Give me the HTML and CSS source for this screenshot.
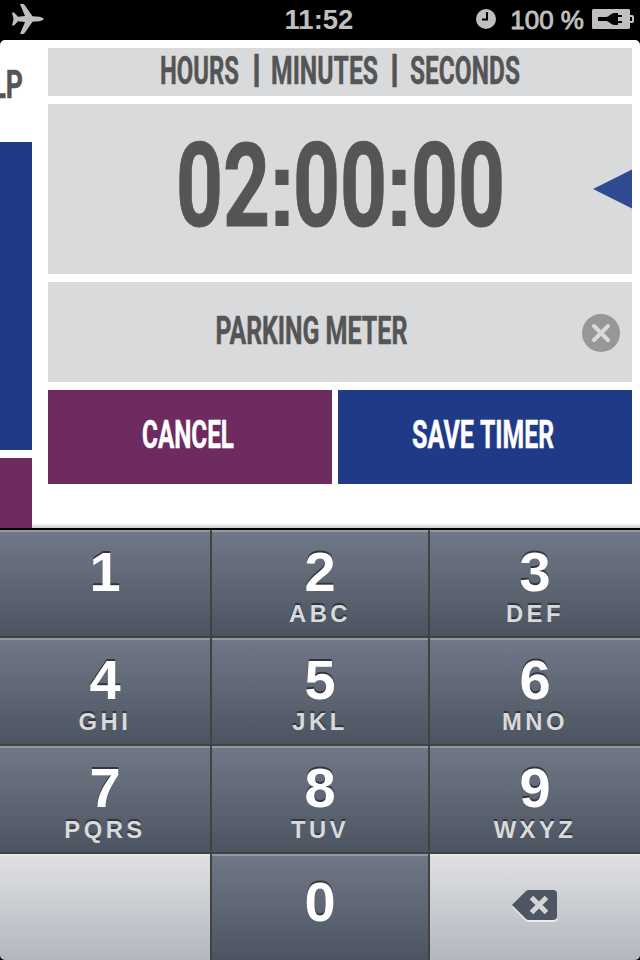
FILE: index.html
```
<!DOCTYPE html>
<html lang="en">
<head>
    <meta charset="UTF-8">
    <title>Timer</title>
    <link rel="stylesheet" href="styles.css">
</head>
<body>
    <div class="phone">
        <header class="status-bar">
            <svg class="airplane" width="32" height="31" viewBox="0 0 32 31">
                <path d="M0 8.500h2l4 4.200l7-.7L8 0h3q1 0 2 1.500l7.500 10.700l7 .6q3.500.700 4.500 2.200q-1 1.500-4.500 2.200l-7 .6L13 28.500q-1 1.500-2 1.500H8l5-12l-7-.7L2 21.500H0l1.500-6.500z"/>
            </svg>
            <span class="time">11:52</span>
            <div class="status-right">
                <svg width="20" height="20" viewBox="0 0 20 20">
                    <circle cx="10" cy="10" r="10"/>
                    <path class="clock-hand" d="M11 3v7.500H6"/>
                </svg>
                <span class="percent">100 %</span>
                <svg width="42" height="20" viewBox="0 0 42 20">
                    <rect width="38" height="20" rx="1.500"/>
                    <path d="M38 6h2q2 0 2 2v4q0 2-2 2h-2z"/>
                    <path class="plug" d="M6 8h8q2 0 4-2t5-2h3v2h4v2h-4v4h4v2h-4v2h-3q-3 0-5-2t-4-2H6z"/>
                    <path class="plug" d="M38 8h2v4h-2z"/>
                </svg>
            </div>
        </header>

        <main class="screen">
            <aside class="side">
                <svg class="side-title condensed" width="32" height="94" viewBox="0 0 32 94">
                    <text x="-8.500" y="58" textLength="31.500" lengthAdjust="spacingAndGlyphs">LP</text>
                </svg>
                <div class="side-block blue"></div>
                <div class="side-block purple"></div>
            </aside>

            <section class="editor">
                <div class="box units">
                    <svg class="condensed" width="584" height="48" viewBox="48 48 584 48">
                        <text x="160" y="84" textLength="79" lengthAdjust="spacingAndGlyphs">HOURS</text>
                        <text class="bar" x="251" y="82" textLength="11" lengthAdjust="spacingAndGlyphs">|</text>
                        <text x="271" y="84" textLength="107" lengthAdjust="spacingAndGlyphs">MINUTES</text>
                        <text class="bar" x="389" y="82" textLength="11" lengthAdjust="spacingAndGlyphs">|</text>
                        <text x="410" y="84" textLength="110" lengthAdjust="spacingAndGlyphs">SECONDS</text>
                    </svg>
                </div>
                <div class="box clock">
                    <svg class="condensed digits" width="584" height="170" viewBox="48 104 584 170">
                        <text x="176" y="226" textLength="94" lengthAdjust="spacingAndGlyphs">02</text>
                        <text class="colon" x="266.500" y="226" textLength="31" lengthAdjust="spacingAndGlyphs">:</text>
                        <text x="293" y="226" textLength="94" lengthAdjust="spacingAndGlyphs">00</text>
                        <text class="colon" x="383.500" y="226" textLength="31" lengthAdjust="spacingAndGlyphs">:</text>
                        <text x="411" y="226" textLength="94" lengthAdjust="spacingAndGlyphs">00</text>
                        <path class="pointer" d="M593 189l39-19.500v39z"/>
                    </svg>
                </div>
                <div class="box name">
                    <svg class="condensed" width="534" height="100" viewBox="48 282 534 100">
                        <text x="215.500" y="344" textLength="104" lengthAdjust="spacingAndGlyphs">PARKING</text>
                        <text x="325.500" y="344" textLength="82" lengthAdjust="spacingAndGlyphs">METER</text>
                    </svg>
                    <svg class="clear" width="38" height="38" viewBox="0 0 38 38">
                        <circle cx="19" cy="19" r="19"/>
                        <path d="M12 12l14 14M26 12L12 26"/>
                    </svg>
                </div>
                <div class="actions">
                    <div class="button purple">
                        <svg class="condensed" width="284" height="94" viewBox="48 390 284 94">
                            <text x="142" y="448" textLength="92" lengthAdjust="spacingAndGlyphs">CANCEL</text>
                        </svg>
                    </div>
                    <div class="button blue">
                        <svg class="condensed" width="294" height="94" viewBox="338 390 294 94">
                            <text x="412" y="448" textLength="62" lengthAdjust="spacingAndGlyphs">SAVE</text>
                            <text x="480" y="448" textLength="74" lengthAdjust="spacingAndGlyphs">TIMER</text>
                        </svg>
                    </div>
                </div>
            </section>
        </main>

        <div class="keypad">
            <div class="key"><b>1</b></div>
            <div class="key"><b>2</b><span>ABC</span></div>
            <div class="key"><b>3</b><span>DEF</span></div>
            <div class="key"><b>4</b><span>GHI</span></div>
            <div class="key"><b>5</b><span>JKL</span></div>
            <div class="key"><b>6</b><span>MNO</span></div>
            <div class="key"><b>7</b><span>PQRS</span></div>
            <div class="key"><b>8</b><span>TUV</span></div>
            <div class="key"><b>9</b><span>WXYZ</span></div>
            <div class="key light"></div>
            <div class="key zero"><b>0</b></div>
            <div class="key light">
                <svg class="backspace" width="45" height="32" viewBox="0 0 45 32">
                    <path class="edge" d="M0 17L14 3q1-1 3-1h24q4 0 4 4v22q0 4-4 4H17q-2 0-3-1z"/>
                    <path d="M0 15L14 1q1-1 3-1h24q4 0 4 4v22q0 4-4 4H17q-2 0-3-1z"/>
                    <path class="cross" d="M19.500 7.500l15 15M34.500 7.500l-15 15"/>
                </svg>
            </div>
        </div>
    </div>
</body>
</html>
```
FILE: styles.css
```
body {
    margin: 0;
    background: #000;
    font-family: "Liberation Sans", Arial, sans-serif;
}

svg {
    display: block;
}

.phone {
    width: 640px;
    height: 960px;
    overflow: hidden;
    background: #000;
}

/* status bar */
.status-bar {
    display: grid;
    grid-template-columns: 1fr auto 1fr;
    align-items: center;
    height: 40px;
    padding: 0 6px 0 12px;
    box-sizing: border-box;
    color: #bfbfbf;
    fill: #bfbfbf;
    font-weight: bold;
}

.airplane {
    margin-top: -2px;
}

.time {
    margin: 0 8px 0 0;
    font-size: 27.5px;
    line-height: 40px;
}

.status-right {
    display: flex;
    align-items: center;
    justify-content: flex-end;
    margin-top: -2px;
}

.percent {
    margin: 1px 8px 0 14px;
    font-size: 26px;
    font-weight: normal;
    line-height: 38px;
    -webkit-text-stroke: .9px #bfbfbf;
}

.clock-hand {
    fill: none;
    stroke: #000;
    stroke-width: 2;
}

.plug {
    fill: #000;
}

/* timer editor */
.screen {
    display: flex;
    gap: 16px;
    height: 488px;
    background: linear-gradient(transparent 483px, rgba(0, 0, 0, .2)) #fff;
    border-radius: 5px 5px 0 0;
}

.side {
    display: flex;
    flex-direction: column;
    gap: 8px;
    width: 32px;
}

.side-title {
    overflow: hidden;
}

.side-block.blue {
    height: 308px;
}

.side-block.purple {
    flex: 1;
}

.editor {
    display: flex;
    flex-direction: column;
    gap: 8px;
    width: 584px;
    padding-top: 8px;
}

.box {
    background: #d9dadc;
}

.condensed {
    font-family: Roboto, sans-serif;
    font-size: 39.4px;
    font-weight: bold;
    fill: #555;
    stroke: #555;
    stroke-width: .5px;
}

.bar {
    font-size: 39px;
}

.digits {
    font-size: 117px;
    stroke-width: 1px;
}

.colon {
    font-family: "Liberation Sans", sans-serif;
    font-size: 111px;
    stroke: none;
}

.pointer {
    fill: #304a91;
    stroke: none;
}

.name {
    display: flex;
    align-items: center;
}

.clear {
    margin-top: 2px;
}

.clear circle {
    fill: #969798;
}

.clear path {
    stroke: #d9dadc;
    stroke-width: 4;
    stroke-linecap: round;
}

.actions {
    display: flex;
    gap: 6px;
}

.button .condensed {
    fill: #fff;
    stroke: #fff;
}

.blue {
    background: #1f3a87;
}

.purple {
    background: #6d2b60;
}

/* number pad */
.keypad {
    display: grid;
    grid-template-columns: 210px 216px 210px;
    grid-template-rows: 106px 106px 106px 106px;
    gap: 2px;
    height: 430px;
    padding-top: 2px;
    background: linear-gradient(#000 2px, #424242 2px);
    border-radius: 0 0 5px 5px;
    overflow: hidden;
}

.key {
    display: flex;
    flex-direction: column;
    align-items: center;
    box-sizing: border-box;
    border-top: 2px solid #9497a4;
    padding-top: 11px;
    background: linear-gradient(#707786, #4d5461);
    color: #fff;
    text-shadow: 0 -2px 0 #30353f;
}

.key b {
    font-size: 56px;
    line-height: 58px;
}

.key span {
    color: #d9dadc;
    font-size: 23.8px;
    font-weight: bold;
    letter-spacing: 3.5px;
    line-height: 26px;
}

.zero {
    padding-top: 17px;
}

.light {
    border-top-color: #e6e7e9;
    background: linear-gradient(#dfe0e3, #c9ccd0 50%, #b2b7c1);
}

.backspace {
    margin: 23px 2px 0 0;
    fill: #4e5563;
}

.backspace .edge {
    fill: #eceded;
}

.backspace .cross {
    stroke: #d3d5d8;
    stroke-width: 5;
}
```
